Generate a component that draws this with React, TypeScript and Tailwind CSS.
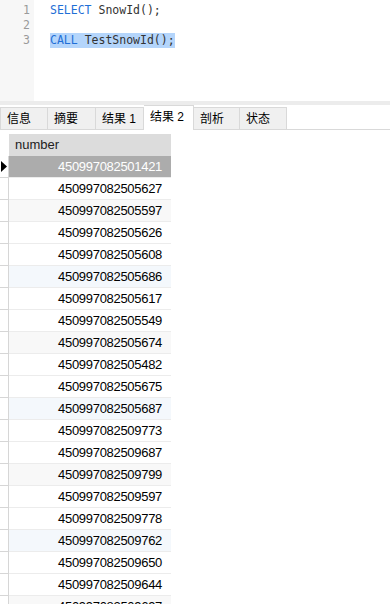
import React from "react";

const values = [
  "450997082501421",
  "450997082505627",
  "450997082505597",
  "450997082505626",
  "450997082505608",
  "450997082505686",
  "450997082505617",
  "450997082505549",
  "450997082505674",
  "450997082505482",
  "450997082505675",
  "450997082505687",
  "450997082509773",
  "450997082509687",
  "450997082509799",
  "450997082509597",
  "450997082509778",
  "450997082509762",
  "450997082509650",
  "450997082509644",
  "450997082509697",
];

const tabs = [
  { label: "信息", w: "w-[48px]" },
  { label: "摘要", w: "w-[48px]" },
  { label: "结果 1", w: "w-[48px]" },
  { label: "结果 2", w: "w-[50px]", active: true },
  { label: "剖析", w: "w-[46px]" },
  { label: "状态", w: "w-[47px]" },
];

const mono = { fontFamily: '"DejaVu Sans Mono", "Liberation Mono", monospace' };
const cjk = { fontFamily: '"Liberation Sans", "Noto Sans CJK SC", sans-serif' };

function Editor() {
  return (
    <div className="flex h-[101px] bg-white" style={mono}>
      <div className="w-[34px] bg-[#f7f7f7] pt-[3px] pr-[4px] text-right text-[11.5px] leading-[15px] text-[#9a9a9a]">
        <div>1</div>
        <div>2</div>
        <div>3</div>
      </div>
      <div className="flex-1 pl-[16px] pt-[3px] text-[11.5px] leading-[15px] text-[#333]">
        <div className="whitespace-pre">
          <span className="text-[#1f6fd6]">SELECT</span> SnowId();
        </div>
        <div>&nbsp;</div>
        <div className="whitespace-pre">
          <span className="inline-block bg-[#b4d5fb] leading-[15px]">
            <span className="text-[#1f6fd6]">CALL</span> TestSnowId();
          </span>
        </div>
      </div>
    </div>
  );
}

function TabBar() {
  return (
    <div className="flex h-[25px] items-end border-b border-[#d9d9d9] bg-white" style={cjk}>
      {tabs.map((t, i) =>
        t.active ? (
          <div
            key={t.label}
            className={`${t.w} -mb-px flex h-[25px] items-center border-t border-r border-[#d9d9d9] bg-white pb-[2px] pl-[6px] text-[12px] text-black`}
          >
            {t.label}
          </div>
        ) : (
          <div
            key={t.label}
            className={`${t.w} flex h-[22px] items-center border-t border-r border-[#d9d9d9] bg-[#f0f0f0] pl-[6px] text-[12px] text-black ${
              i === 0 ? "border-l" : ""
            }`}
          >
            {t.label}
          </div>
        )
      )}
    </div>
  );
}

function Grid() {
  return (
    <div className="mt-[4px]" style={{ fontFamily: '"Liberation Sans", Arial, sans-serif' }}>
      <div className="flex h-[22px]">
        <div className="w-[9px] bg-white" />
        <div className="flex w-[162px] items-center bg-[#dcdcdc] pl-[6px] text-[13px] text-[#222]">
          number
        </div>
      </div>
      {values.map((v, i) => {
        // every third row is tinted, alternating grey and blue
        const blue = i % 3 === 2 && Math.floor(i / 3) % 2 === 1;
        const grey = i % 3 === 2 && !blue;
        const cls =
          i === 0
            ? "bg-[#acacac] text-white"
            : blue
            ? "bg-[#f4f8fc] text-black"
            : grey
            ? "bg-[#f8f8f8] text-black"
            : "bg-white text-black";
        return (
          <div key={i} className="flex h-[22px]">
            <div className="flex w-[9px] items-center border-r border-b border-[#d6d6d6] bg-white">
              {i === 0 && (
                <svg width="7" height="11" viewBox="0 0 7 11" className="ml-[1px]">
                  <path d="M0 0 L6 5.5 L0 11 Z" fill="#000" />
                </svg>
              )}
            </div>
            <div
              className={`flex w-[162px] items-center justify-end border-b border-[#ececec] pr-[9px] text-[13px] tracking-[-0.3px] ${cls}`}
            >
              {v}
            </div>
          </div>
        );
      })}
    </div>
  );
}

export default function App() {
  return (
    <div className="relative h-[604px] w-[390px] overflow-hidden bg-white">
      <Editor />
      <div className="h-[4px] bg-[#ececec]" />
      <TabBar />
      <Grid />
    </div>
  );
}
